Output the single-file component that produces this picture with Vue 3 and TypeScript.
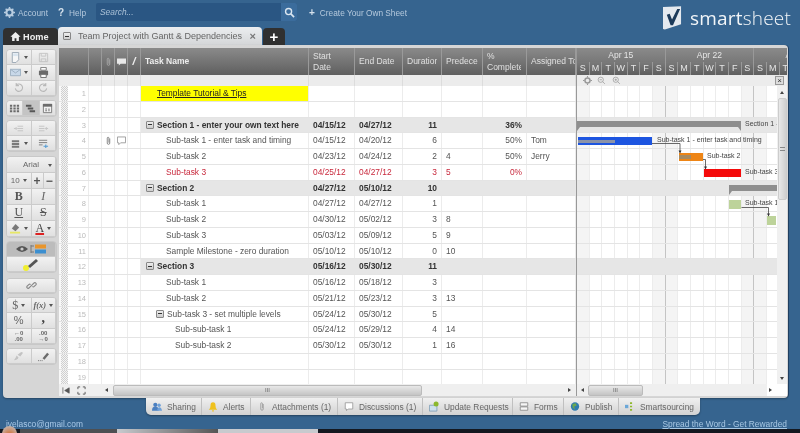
<script setup lang="ts">
interface Row {
  n: number
  name?: string
  start?: string
  end?: string
  dur?: string
  pre?: string
  pct?: string
  who?: string
  kind?: 'section' | 'red' | 'link'
  indent?: number
  toggle?: boolean
  icons?: boolean
}

const rows: Row[] = [
  { n: 1, name: 'Template Tutorial & Tips', kind: 'link', indent: 16 },
  { n: 2 },
  { n: 3, name: 'Section 1 - enter your own text here', start: '04/15/12', end: '04/27/12', dur: '11', pct: '36%', kind: 'section', toggle: true, indent: 5 },
  { n: 4, name: 'Sub-task 1 - enter task and timing', start: '04/15/12', end: '04/20/12', dur: '6', pct: '50%', who: 'Tom', indent: 25, icons: true },
  { n: 5, name: 'Sub-task 2', start: '04/23/12', end: '04/24/12', dur: '2', pre: '4', pct: '50%', who: 'Jerry', indent: 25 },
  { n: 6, name: 'Sub-task 3', start: '04/25/12', end: '04/27/12', dur: '3', pre: '5', pct: '0%', kind: 'red', indent: 25 },
  { n: 7, name: 'Section 2', start: '04/27/12', end: '05/10/12', dur: '10', kind: 'section', toggle: true, indent: 5 },
  { n: 8, name: 'Sub-task 1', start: '04/27/12', end: '04/27/12', dur: '1', indent: 25 },
  { n: 9, name: 'Sub-task 2', start: '04/30/12', end: '05/02/12', dur: '3', pre: '8', indent: 25 },
  { n: 10, name: 'Sub-task 3', start: '05/03/12', end: '05/09/12', dur: '5', pre: '9', indent: 25 },
  { n: 11, name: 'Sample Milestone - zero duration', start: '05/10/12', end: '05/10/12', dur: '0', pre: '10', indent: 25 },
  { n: 12, name: 'Section 3', start: '05/16/12', end: '05/30/12', dur: '11', kind: 'section', toggle: true, indent: 5 },
  { n: 13, name: 'Sub-task 1', start: '05/16/12', end: '05/18/12', dur: '3', indent: 25 },
  { n: 14, name: 'Sub-task 2', start: '05/21/12', end: '05/23/12', dur: '3', pre: '13', indent: 25 },
  { n: 15, name: 'Sub-task 3 - set multiple levels', start: '05/24/12', end: '05/30/12', dur: '5', toggle: true, indent: 15 },
  { n: 16, name: 'Sub-sub-task 1', start: '05/24/12', end: '05/29/12', dur: '4', pre: '14', indent: 34 },
  { n: 17, name: 'Sub-sub-task 2', start: '05/30/12', end: '05/30/12', dur: '1', pre: '16', indent: 34 },
  { n: 18 },
  { n: 19 },
]

const dayLetters = ['S', 'M', 'T', 'W', 'T', 'F', 'S']
const ganttDays = Array.from({ length: 17 }, (_, i) => dayLetters[i % 7])
const months = ['Apr 15', 'Apr 22', 'Apr 29']

const tabs = [
  { label: 'Sharing', w: 56, ic: 'sharing' },
  { label: 'Alerts', w: 49, ic: 'alerts' },
  { label: 'Attachments (1)', w: 87, ic: 'attach' },
  { label: 'Discussions (1)', w: 85, ic: 'disc' },
  { label: 'Update Requests', w: 90, ic: 'update' },
  { label: 'Forms', w: 51, ic: 'forms' },
  { label: 'Publish', w: 55, ic: 'publish' },
  { label: 'Smartsourcing', w: 81, ic: 'smart' },
]

const bars = [
  { cls: 'blue', left: 1, top: 137, w: 74 },
  { cls: 'orange', left: 101.7, top: 153, w: 24.3 },
  { cls: 'red', left: 127, top: 169, w: 37 },
  { cls: 'green', left: 152, top: 200, w: 12.3 },
  { cls: 'green', left: 189.7, top: 216, w: 9.3 },
]
const labels = [
  { text: 'Section 1 -', left: 168, top: 119 },
  { text: 'Sub-task 1 - enter task and timing', left: 80, top: 135 },
  { text: 'Sub-task 2', left: 130, top: 151 },
  { text: 'Sub-task 3', left: 168, top: 167 },
  { text: 'Sub-task 1', left: 168, top: 198 },
]
function pos(left: number, top: number, w?: number) {
  return { left: left + 'px', top: top - 86 + 'px', width: w === undefined ? undefined : w + 'px' }
}
</script>

<template>
  <div class="page">
    <header class="topbar">
      <span class="toplink first"><svg class="ic" viewBox="0 0 12 12"><circle cx="6" cy="6" r="3.400" fill="none" stroke="#b9cde0" stroke-width="2.400"/><path d="M6 0v2M6 10v2M0 6h2M10 6h2M1.800 1.800l1.400 1.400M8.800 8.800l1.400 1.400M1.800 10.200l1.400-1.400M8.800 3.200l1.400-1.400" stroke="#b9cde0" stroke-width="1.600"/></svg>Account</span>
      <span class="toplink help"><b>?</b>Help</span>
      <div class="search">
        <span class="search-text">Search...</span>
        <span class="search-btn"><svg class="ic" viewBox="0 0 12 12"><circle cx="5" cy="5" r="3.300" fill="none" stroke="#dbe6f0" stroke-width="1.500"/><path d="M7.500 7.500l3.500 3.500" stroke="#dbe6f0" stroke-width="1.800"/></svg></span>
      </div>
      <span class="toplink create"><b>+</b>Create Your Own Sheet</span>
      <div class="logo">
        <svg class="logo-mark" viewBox="0 0 20 25"><path d="M0 1l19-1v19l-17 5.500L0 24z" fill="#e4e9ef"/><path d="M4 9l3-1 2.500 6L15 3h3l-7.500 17H8z" fill="#1c3a5a"/></svg>
        <span class="logo-text"><b>smart</b>sheet</span>
      </div>
    </header>

    <nav class="tabbar">
      <div class="tab home"><svg class="ic" viewBox="0 0 12 12"><path d="M6 1L.5 6.200h1.800V11h2.700V7.800h2V11h2.700V6.200h1.800z" fill="#eee"/></svg>Home</div>
      <div class="tab sheet"><span class="minus-box"></span><span class="sheet-name">Team Project with Gantt &amp; Dependencies</span><span class="close">×</span></div>
      <div class="tab plus">+</div>
    </nav>

    <main class="panel">
      <aside class="tools">
        <div class="group g2 h48">
          <span><svg class="ti" viewBox="0 0 12 12"><path d="M2.500.5h7v8l-3 3h-4z" fill="#fafafa" stroke="#8a9aaa"/><path d="M3.500 1.500h5v3h-5z" fill="#d6e4f0"/></svg><i class="caret"></i></span>
          <span><svg class="ti" viewBox="0 0 12 12"><path d="M1.500 1.500h9v9h-9zM3.500 1.500v3h5v-3M3.500 10.500v-3h5v3" fill="none" stroke="#bcbcbc"/></svg></span>
          <span><svg class="ti" viewBox="0 0 12 12"><path d="M.5 2.500h11v7H.5z" fill="#c3d6ea" stroke="#8fa5ba"/><path d="M.5 2.500l5.500 4 5.500-4" fill="none" stroke="#8fa5ba"/></svg><i class="caret"></i></span>
          <span><svg class="ti" viewBox="0 0 12 12"><path d="M3 .5h6v3H3z" fill="#fff" stroke="#666"/><path d="M1 4h10v5H1z" fill="#555"/><path d="M3 8h6v3.500H3z" fill="#fff" stroke="#555"/></svg></span>
          <span><svg class="ti" viewBox="0 0 12 12"><path d="M3.500 3.500a4 4 0 1 1-1 3.500M3.500 1v3h3" fill="none" stroke="#b0b0b0" stroke-width="1.200"/></svg></span>
          <span><svg class="ti" viewBox="0 0 12 12"><path d="M8.500 3.500a4 4 0 1 0 1 3.500M8.500 1v3h-3" fill="none" stroke="#b0b0b0" stroke-width="1.200"/></svg></span>
        </div>
        <div class="group g3 h17">
          <span><svg class="ti" viewBox="0 0 12 12"><path d="M1 2h2.500v2H1zM4.800 2h2.500v2H4.800zM8.500 2H11v2H8.500zM1 5h2.500v2H1zM4.800 5h2.500v2H4.800zM8.500 5H11v2H8.500zM1 8h2.500v2H1zM4.800 8h2.500v2H4.800zM8.500 8H11v2H8.500z" fill="#555"/></svg></span>
          <span class="on"><svg class="ti" viewBox="0 0 12 12"><path d="M1 2h6v2H1zM3 5h6v2H3zM5 8h6v2H5z" fill="#444"/></svg></span>
          <span><svg class="ti" viewBox="0 0 12 12"><path d="M1.500 1.500h9v9h-9z" fill="#f4f4f4" stroke="#666"/><path d="M1 1h10v3H1z" fill="#555"/><path d="M3.500 6h2v1h-2zM3.500 8h2v1h-2zM7 6h1.200v3H7z" fill="#666"/></svg></span>
        </div>
        <div class="group g2 h32">
          <span><svg class="ti" viewBox="0 0 12 12"><path d="M5 3.500h6M5 6h6M5 8.500h6M1 6h3M3 4.500L4.500 6 3 7.500" fill="none" stroke="#bcbcbc"/></svg></span>
          <span><svg class="ti" viewBox="0 0 12 12"><path d="M1 3.500h6M1 6h6M1 8.500h6M8 6h3M9.500 4.500L8 6l1.500 1.500" fill="none" stroke="#bcbcbc"/></svg></span>
          <span><svg class="ti" viewBox="0 0 12 12"><path d="M2 2.500h8V4.500H2zM2 5.500h8V7.500H2zM2 8.500h8V10.500H2z" fill="#666"/></svg><i class="caret"></i></span>
          <span><svg class="ti" viewBox="0 0 12 12"><path d="M1 2.500h9M1 5h9M1 7.500h4" stroke="#666" fill="none"/><path d="M6 9h5M8.500 7v4" stroke="#3c8fd0" stroke-width="1.200" fill="none"/></svg></span>
        </div>
        <div class="group g4 h82">
          <span class="s4 fontname">Arial<i class="caret far"></i></span>
          <span class="s2 size">10<i class="caret"></i></span><span class="pm">+</span><span class="pm">−</span>
          <span class="s2 face"><b>B</b></span><span class="s2 face"><i>I</i></span>
          <span class="s2 face"><u>U</u></span><span class="s2 face"><s>S</s></span>
          <span class="s2"><svg class="ti" viewBox="0 0 12 12"><path d="M2 6l4-5 4 4-4 4z" fill="#666"/><path d="M0 10.500h11" stroke="#e8e850" stroke-width="2"/></svg><i class="caret"></i></span>
          <span class="s2 face acolor"><u>A</u><i class="caret"></i></span>
        </div>
        <div class="group g1 h32 m2">
          <span class="gray"><svg viewBox="0 0 32 12" class="wide"><path d="M1 6q6-6 12 0-6 6-12 0z" fill="#555"/><circle cx="7" cy="6" r="1.600" fill="#ccc"/><path d="M16 2v8M16 3h3M16 9h3" stroke="#777" fill="none"/><rect x="20" y="1.500" width="11" height="4" fill="#e8952c"/><rect x="20" y="6.500" width="11" height="4" fill="#3c8fd0"/></svg></span>
          <span><svg viewBox="0 0 20 14" class="wide2"><circle cx="5" cy="11" r="3" fill="#f0ee30"/><path d="M7 9l8-7 2 2-8 7z" fill="#555"/></svg></span>
        </div>
        <div class="group g1 h16 m5">
          <span><svg class="ti" viewBox="0 0 12 12"><path d="M5 7L3 9a1.500 1.500 0 0 1-2-2l2-2a1.500 1.500 0 0 1 2 0M7 5l2-2a1.500 1.500 0 0 1 2 2L9 7a1.500 1.500 0 0 1-2 0M4.500 7.500l3-3" fill="none" stroke="#777" stroke-width="1.200"/></svg></span>
        </div>
        <div class="group g2 h48">
          <span class="money">$<i class="caret"></i></span><span class="fx"><i>f(x)</i><i class="caret"></i></span>
          <span class="pct">%</span><span class="comma">,</span>
          <span class="mini">←0<br/>.00</span><span class="mini">.00<br/>→0</span>
        </div>
        <div class="group g2 h17">
          <span><svg class="ti" viewBox="0 0 12 12"><path d="M1 10q4 0 5-3l-2-2q-1 3-3 5zM5 4l4-3 2 1-3 4z" fill="#bcbcbc"/></svg></span>
          <span><svg class="ti" viewBox="0 0 12 12"><path d="M5 8l5-6 2 1.500-5 6z" fill="#555"/><path d="M0 10.500h1M2 10.500h1M4 10.500h1" stroke="#555"/></svg></span>
        </div>
      </aside>

      <section class="grid">
        <div class="ghead">
          <div class="c first-h"></div>
          <div class="c ico"></div>
          <div class="c ico"><svg viewBox="0 0 8 12" class="mini-ic"><path d="M5.500 3v5.500a1.500 1.500 0 0 1-3 0V2.500a1 1 0 0 1 2 0V8" fill="none" stroke="#aaa"/></svg></div>
          <div class="c ico"><svg viewBox="0 0 10 10" class="mini-ic"><path d="M0 1h10v6H4L2 9V7H0z" fill="#e8e8e8"/></svg></div>
          <div class="c ico slash">/</div>
          <div class="c name hname">Task Name</div>
          <div class="c d1">Start<br/>Date</div><div class="c d2">End Date</div><div class="c d3"><span class="cl w30">Duration</span></div><div class="c d4">Predece</div><div class="c d5">%<span class="cl w34">Complete</span></div><div class="c d6">Assigned To</div>
        </div>
        <div class="gsub">
          <div class="c first-h"></div><div class="c ico"></div><div class="c ico"></div><div class="c ico"></div><div class="c ico"></div>
          <div class="c name"></div><div class="c d1"></div><div class="c d2"></div><div class="c d3"></div><div class="c d4"></div><div class="c d5"></div><div class="c d6"></div>
        </div>
        <div class="gbody">
          <div v-for="r in rows" :key="r.n" class="row" :class="r.kind">
            <div class="c gut"></div>
            <div class="c num">{{ r.n }}</div>
            <div class="c ico"></div>
            <div class="c ico"><svg v-if="r.icons" viewBox="0 0 8 12" class="mini-ic"><path d="M5.500 3v5.500a1.500 1.500 0 0 1-3 0V2.500a1 1 0 0 1 2 0V8" fill="none" stroke="#777"/></svg></div>
            <div class="c ico"><svg v-if="r.icons" viewBox="0 0 10 10" class="mini-ic"><path d="M.5.5h9V7H4L2 9V7H.5z" fill="#fff" stroke="#999"/></svg></div>
            <div class="c ico"></div>
            <div class="c name" :style="{ paddingLeft: (r.indent ?? 0) + 'px' }">
              <span v-if="r.toggle" class="minus-box small"></span>
              <span class="nm">{{ r.name }}</span>
            </div>
            <div class="c d1">{{ r.start }}</div><div class="c d2">{{ r.end }}</div>
            <div class="c d3 right">{{ r.dur }}</div><div class="c d4">{{ r.pre }}</div>
            <div class="c d5 right">{{ r.pct }}</div><div class="c d6">{{ r.who }}</div>
          </div>
        </div>
        <div class="hscroll">
          <svg class="hs-ic" viewBox="0 0 10 10"><path d="M1 1.500v7M8 2L3 5l5 3z" fill="#555" stroke="#555" stroke-width=".8"/></svg>
          <svg class="hs-ic second" viewBox="0 0 10 10"><path d="M1 3.500V1h2.500M6.500 1H9v2.500M9 6.500V9H6.500M3.500 9H1V6.500" fill="none" stroke="#555"/></svg>
          <i class="tri-l first-arrow"></i>
          <div class="thumb wide-thumb">III</div>
          <i class="tri-r"></i>
        </div>
      </section>

      <section class="gantt">
        <div class="months"><span v-for="m in months" :key="m" class="month">{{ m }}</span></div>
        <div class="days"><span v-for="(d, i) in ganttDays" :key="i" class="day">{{ d }}</span></div>
        <div class="gtools">
          <svg class="ic" viewBox="0 0 12 12"><circle cx="6" cy="6" r="3.400" fill="none" stroke="#999" stroke-width="2"/><path d="M6 0v2M6 10v2M0 6h2M10 6h2" stroke="#999" stroke-width="1.500"/></svg>
          <svg class="ic" viewBox="0 0 12 12"><circle cx="5" cy="5" r="3.500" fill="none" stroke="#999"/><path d="M3.500 5h3M7.500 7.500l3 3" stroke="#999"/></svg>
          <svg class="ic" viewBox="0 0 12 12"><circle cx="5" cy="5" r="3.500" fill="none" stroke="#999"/><path d="M3.500 5h3M5 3.500v3M7.500 7.500l3 3" stroke="#999"/></svg>
          <span class="gx">×</span>
        </div>
        <div class="gbody2">
          <div class="chart">
            <div class="columns"><span v-for="(d, i) in ganttDays" :key="i" class="gcol" :class="{ wk: d === 'S', wkend: i % 7 === 6 }"></span></div>
            <div class="gridrows"><div v-for="r in rows" :key="r.n" class="grow" :class="{ sect: r.kind === 'section' }"></div></div>
            <div class="sectionbar" :style="pos(0, 121, 164)"></div>
            <div class="sectionbar" :style="pos(152, 185, 60)"></div>
            <div v-for="(b, i) in bars" :key="i" class="bar" :class="b.cls" :style="pos(b.left, b.top, b.w)"></div>
            <div class="progress" :style="pos(1, 139.500, 37)"></div>
            <div class="progress or" :style="pos(102, 155, 12)"></div>
            <svg class="links" viewBox="0 0 200 300">
              <path d="M75 57.500h28v9M126 73.500h2.500v9M164.500 121.500h27v8" fill="none" stroke="#444" stroke-width="0.800"/>
              <path d="M101.500 64.500h3l-1.500 3zM127 80.500h3l-1.500 3zM190 127.500h3l-1.500 3z" fill="#333"/>
            </svg>
            <span v-for="l in labels" :key="l.text + l.top" class="blabel" :style="pos(l.left, l.top)">{{ l.text }}</span>
          </div>
          <div class="vscroll"><i class="tri-u"></i><div class="vthumb"><i></i></div><i class="tri-d"></i></div>
        </div>
        <div class="hscroll g">
          <i class="tri-l"></i><div class="thumb g-thumb">III</div><i class="tri-r"></i>
        </div>
      </section>
    </main>

    <div class="bottomtabs">
      <span v-for="t in tabs" :key="t.label" class="btab" :style="{ width: t.w + 'px' }">
        <svg class="bi" viewBox="0 0 12 12">
          <g v-if="t.ic === 'sharing'"><circle cx="4" cy="4" r="2.500" fill="#4a7fc0"/><path d="M0 11q0-5 4-5t4 5z" fill="#4a7fc0"/><circle cx="8.500" cy="4.500" r="2" fill="#6ea0d8"/><path d="M6 11q1-4 3-4t3 4z" fill="#6ea0d8"/></g>
          <path v-else-if="t.ic === 'alerts'" d="M6 1q3 0 3 4t2 5H1q2-1 2-5t3-4zM5 10.500h2V12H5z" fill="#efc11d"/>
          <path v-else-if="t.ic === 'attach'" d="M7.500 3v6a1.500 1.500 0 0 1-3 0V2.500a1 1 0 0 1 2 0V8" fill="none" stroke="#999"/>
          <path v-else-if="t.ic === 'disc'" d="M1.500 1.500h9V9H5L3 11V9H1.500z" fill="#fff" stroke="#999"/>
          <g v-else-if="t.ic === 'update'"><path d="M.5 4.500h9v7h-9z" fill="#cfe0ee" stroke="#7d9cb5"/><circle cx="8.500" cy="3" r="3" fill="#8cb82d"/></g>
          <path v-else-if="t.ic === 'forms'" d="M1.500 1.500h9v4h-9zM1.500 6.500h9v4h-9z" fill="#f6f6f6" stroke="#888" stroke-linejoin="round"/>
          <g v-else-if="t.ic === 'publish'"><circle cx="6" cy="6" r="5" fill="#2f7bb0"/><path d="M3 3l4-1 1 3-3 1 1 4-3-3z" fill="#6aa84f"/></g>
          <g v-else><rect x="0" y="4" width="4" height="4" fill="#6ba7d8"/><path d="M6 1h2.500v2H6zM6 5h2.500v2H6zM6 9h2.500v2H6z" fill="#8fb82d"/></g>
        </svg>{{ t.label }}
      </span>
    </div>
    <footer class="foot"><span class="email">ivelasco@gmail.com</span><span class="spread">Spread the Word - Get Rewarded</span></footer>
    <div class="taskbar"><span class="start"></span><span class="tb1"></span><span class="tb2"></span><span class="tb3"></span></div>
  </div>
</template>

<style>
html, body { margin: 0; padding: 0; background: #36648f; }
</style>

<style scoped>
.page { width: 800px; height: 433px; overflow: hidden; background: #36648f; font-family: "Liberation Sans", Arial, sans-serif; font-size: 8.400px; color: #333; display: flex; flex-direction: column; filter: blur(0.300px); position: relative; }
.ic { width: 11px; height: 11px; flex: none; }
.topbar { height: 27px; display: flex; align-items: flex-start; padding: 3px 0 0 4px; box-sizing: border-box; color: #b5c9dd; flex: none; }
.toplink { display: flex; align-items: center; gap: 3px; height: 19px; font-size: 8.300px; flex: none; }
.toplink b { font-size: 10px; color: #d5e1ec; font-weight: bold; }
.first { width: 45px; }
.help { margin-left: 9px; width: 29px; gap: 5px; }
.search { width: 201px; height: 18px; margin-left: 9px; background: #2a5683; border-radius: 2px; display: flex; justify-content: space-between; align-items: center; flex: none; }
.search-text { font-style: italic; padding-left: 4px; color: #a9c0d6; font-size: 8.400px; }
.search-btn { width: 16px; height: 18px; background: #3b6c9c; display: flex; align-items: center; justify-content: center; border-radius: 0 2px 2px 0; }
.create { margin-left: 12px; gap: 5px; }
.logo { margin-left: auto; margin-right: 9px; margin-top: 2px; display: flex; gap: 8px; align-items: center; color: #f2f5f8; }
.logo-mark { width: 19px; height: 24px; }
.logo-text { font-size: 19px; font-family: "Open Sans", sans-serif; letter-spacing: 0.200px; font-weight: 300; }
.logo-text b { font-weight: 400; }
.tabbar { height: 18px; display: flex; padding-left: 3px; flex: none; }
.tab { display: flex; align-items: center; border-radius: 4px 4px 0 0; box-sizing: border-box; }
.home { width: 55px; background: #303030; color: #eee; font-weight: bold; font-size: 9.200px; gap: 2px; padding-left: 7px; margin-top: 1px; }
.sheet { width: 204px; background: linear-gradient(#eceef0, #d4d6d8); padding-left: 5px; font-size: 9px; color: #666; white-space: nowrap; }
.sheet-name { margin-left: 7px; flex: 1; }
.close { margin-right: 6px; font-size: 11px; font-weight: bold; color: #777; }
.plus { width: 22px; margin-left: 1px; background: #303030; color: #fff; font-size: 15px; font-weight: bold; justify-content: center; margin-top: 1px; }
.minus-box { display: inline-block; width: 6px; height: 6px; border: 1px solid #888; border-radius: 1px; background: linear-gradient(#eee, #ccc); position: relative; vertical-align: -1px; flex: none; }
.minus-box::after { content: ""; position: absolute; left: 1px; right: 1px; top: 2.500px; height: 1px; background: #333; }
.minus-box.small { margin-right: 3px; }
.panel { height: 353px; width: 785px; margin-left: 3px; background: #d6d6d6; border-radius: 0 4px 4px 4px; display: flex; padding: 3px 0 2px; box-sizing: border-box; flex: none; box-shadow: 0 1px 2px rgba(0,0,0,.3), 1px 0 0 rgba(30,60,95,.8); }
.tools { width: 56px; flex: none; padding: 1px 0 0 3px; box-sizing: border-box; display: flex; flex-direction: column; gap: 3px; }
.group { display: grid; grid-auto-rows: 1fr; border: 1px solid #c8c8c8; border-radius: 4px; overflow: hidden; flex: none; color: #666; width: 51px; box-sizing: border-box; }
.group > span { display: flex; align-items: center; justify-content: center; min-height: 0; border-right: 1px solid #cbcbcb; border-bottom: 1px solid #cbcbcb; font-size: 8px; box-sizing: border-box; background: linear-gradient(#f2f2f2, #e0e0e0); gap: 2px; overflow: hidden; white-space: nowrap; }
.h48 { height: 48px; }
.h17 { height: 17px; }
.h32 { height: 32px; }
.h82 { height: 82px; }
.h16 { height: 16px; }
.m2 { margin-top: 0; }
.m5 { margin-top: 2px; }
.h82 { margin-top: 1px; }
.g1 { grid-template-columns: 1fr; }
.g2 { grid-template-columns: 1fr 1fr; }
.g3 { grid-template-columns: 1fr 1.100fr 1fr; }
.g4 { grid-template-columns: repeat(4, 1fr); }
.group .s4 { grid-column: span 4; }
.group .s2 { grid-column: span 2; }
.group .gray { background: #bcbcbc; }
.group .on { background: #c4c4c4; }
.ti { width: 11px; height: 11px; flex: none; opacity: .85; }
.caret { display: inline-block; width: 0; height: 0; border-top: 3px solid #555; border-left: 2px solid transparent; border-right: 2px solid transparent; flex: none; margin-left: 1px; }
.caret.far { position: absolute; right: 3px; top: 7px; }
.fontname { position: relative; font-size: 8px; }
.group .pm { font-weight: bold; font-size: 12px; color: #555; }
.group .face { font-family: "Liberation Serif", serif; font-size: 12px; color: #555; position: relative; }
.face i { font-weight: normal; color: #666; }
.acolor u { color: #444; text-decoration-color: #d22; text-decoration-thickness: 1.500px; }
.group .money { font-size: 12px; font-family: "Liberation Serif", serif; }
.group .fx { font-family: "Liberation Serif", serif; font-size: 8.500px; font-weight: bold; }
.group .pct { font-size: 11px; color: #666; }
.group .comma { font-size: 14px; line-height: 9px; padding-bottom: 5px; font-weight: bold; color: #444; font-family: "Liberation Serif", serif; }
.group .mini { font-size: 6px; line-height: 6px; text-align: center; font-weight: bold; white-space: normal; display: block; padding-top: 1px; }
.wide { width: 32px; height: 12px; }
.wide2 { width: 20px; height: 14px; }

.grid { width: 517px; flex: none; display: flex; flex-direction: column; background: #fff; }
.ghead, .gsub, .row { display: flex; }
.ghead { height: 27px; background: linear-gradient(#8a8a8a, #5f5f5f); color: #e0e0e0; font-size: 8.500px; line-height: 11px; flex: none; }
.ghead .c { display: flex; align-items: center; border-right: 1px solid #9a9a9a; padding-left: 4px; overflow: hidden; white-space: nowrap; }
.c { box-sizing: border-box; flex: none; overflow: hidden; white-space: nowrap; }
.first-h { width: 30px; }
.gut { width: 9px; }
.num { width: 21px; }
.ico { width: 13px; }
.ghead .ico { padding: 0; justify-content: center; }
.slash { font-style: italic; font-weight: bold; font-size: 11px; color: #eee; }
.name { width: 168px; }
.d1 { width: 46px; }
.d2 { width: 48px; }
.d3 { width: 39px; }
.d4 { width: 41px; }
.d5 { width: 44px; }
.d6 { width: 49px; }
.ghead .d1, .ghead .d5 { white-space: normal; display: block; padding-top: 3px; }
.ghead .hname { font-weight: bold; color: #eee; }
.cl { display: block; overflow: hidden; white-space: nowrap; }
.w30 { width: 30px; }
.w34 { width: 34px; }
.gsub { height: 11px; background: #ececec; flex: none; }
.gsub .c { border-right: 1px solid #dcdcdc; }
.gsub .first-h { border-right-color: #dcdcdc; }
.gbody { flex: 1; min-height: 0; overflow: hidden; }
.row { height: 15.750px; line-height: 15px; border-bottom: 1px solid #e4e4e4; box-sizing: border-box; color: #555; font-size: 8.400px; }
.row .c { border-right: 1px solid #ececec; padding: 0 4px; }
.row .gut { padding: 0; border-right: 0; border-left: 2px solid #f8f8f8; background: repeating-conic-gradient(#cfcfcf 0 25%, #f4f4f4 0 50%) 0 0 / 2px 2px; }
.row .num { color: #bbb; text-align: right; padding-right: 2px; font-size: 7.500px; }
.row .ico { padding: 0; display: flex; align-items: center; justify-content: center; }
.mini-ic { width: 9px; height: 10px; }
.row .name { padding-right: 0; }
.right { text-align: right; }
.row .d3.right, .row .d5.right { padding-right: 4px; }
.row.section .name, .row.section .d1, .row.section .d2, .row.section .d3, .row.section .d4, .row.section .d5, .row.section .d6 { background: #e6e6e6; font-weight: bold; color: #333; border-right-color: #e6e6e6; }
.row.red .name, .row.red .d1, .row.red .d2, .row.red .d3, .row.red .d4, .row.red .d5 { color: #c8283c; }
.row.link .name { background: #ffff00; }
.row.link .nm { text-decoration: underline; color: #222; }
.hscroll { height: 12px; flex: none; display: flex; align-items: center; background: #efefef; color: #444; font-size: 7px; }
.hs-ic { width: 9px; height: 9px; margin-left: 3px; flex: none; }
.hs-ic.second { margin-left: 6px; }
.tri-l, .tri-r, .tri-u, .tri-d { display: block; width: 0; height: 0; flex: none; }
.tri-l { border-right: 3px solid #444; border-top: 2.500px solid transparent; border-bottom: 2.500px solid transparent; margin: 0 4px; }
.tri-r { border-left: 3px solid #444; border-top: 2.500px solid transparent; border-bottom: 2.500px solid transparent; margin-left: auto; margin-right: 5px; }
.first-arrow { margin-left: 19px; margin-right: 5px; }
.tri-u { border-bottom: 3px solid #444; border-left: 2.500px solid transparent; border-right: 2.500px solid transparent; margin: 5px 0 4px; }
.tri-d { border-top: 3px solid #444; border-left: 2.500px solid transparent; border-right: 2.500px solid transparent; margin: auto 0 4px; }
.thumb { height: 11px; border: 1px solid #bbb; border-radius: 2px; background: linear-gradient(#e8e8e8, #c4c4c4); box-sizing: border-box; text-align: center; line-height: 9px; font-size: 6px; color: #666; flex: none; }
.wide-thumb { width: 309px; }
.gantt { width: 211px; flex: none; display: flex; flex-direction: column; background: #fff; border-left: 1px solid #999; box-sizing: border-box; overflow: hidden; }
.months { height: 14px; background: linear-gradient(#8a8a8a, #787878); display: flex; color: #e6e6e6; flex: none; font-size: 8.500px; line-height: 14px; }
.month { width: 88.600px; text-align: center; flex: none; border-right: 1px solid #999; box-sizing: border-box; }
.days { height: 13px; background: linear-gradient(#7a7a7a, #5f5f5f); display: flex; color: #e6e6e6; flex: none; font-size: 9px; line-height: 13px; }
.day { width: 12.660px; text-align: center; flex: none; border-right: 1px solid #999; box-sizing: border-box; }
.gtools { height: 11px; background: #ececec; display: flex; align-items: center; gap: 5.500px; padding-left: 5.500px; flex: none; }
.gtools .ic { width: 9px; height: 9px; }
.gx { margin-left: auto; margin-right: 3px; width: 9px; height: 9px; line-height: 8px; text-align: center; border: 1px solid #999; box-sizing: border-box; background: #ddd; font-size: 8px; }
.gbody2 { flex: 1; display: flex; min-height: 0; }
.chart { position: relative; flex: 1; overflow: hidden; min-width: 0; }
.columns { position: absolute; inset: 0; display: flex; }
.gcol { width: 12.660px; flex: none; border-right: 1px solid #ececec; box-sizing: border-box; }
.gcol.wk { background: #f4f4f4; }
.gcol.wkend { border-right-color: #c4c4c4; }
.gridrows { position: absolute; inset: 0; }
.grow { height: 15.750px; border-bottom: 1px solid #e4e4e4; box-sizing: border-box; }
.grow.sect { background: #e6e6e6; }
.sectionbar { position: absolute; height: 6px; background: #8e8e8e; }
.sectionbar::before, .sectionbar::after { content: ""; position: absolute; top: 6px; border-top: 4px solid #8e8e8e; }
.sectionbar::before { left: 0; border-right: 3px solid transparent; }
.sectionbar::after { right: 0; border-left: 3px solid transparent; }
.bar { position: absolute; height: 8px; }
.bar.blue { background: #1d55e0; }
.bar.orange { background: #ee8516; }
.bar.red { background: #f40a0a; }
.bar.green { background: #bdd39a; height: 8.500px; }
.progress { position: absolute; height: 3px; background: #8b93a8; }
.progress.or { background: #a78a60; height: 4px; }
.links { position: absolute; left: 0; top: 0; width: 200px; height: 300px; }
.blabel { position: absolute; font-size: 7px; line-height: 10px; color: #444; white-space: nowrap; }
.vscroll { width: 10px; flex: none; background: #f0f0f0; display: flex; flex-direction: column; align-items: center; }
.vthumb { height: 102px; width: 9px; border: 1px solid #ccc; border-radius: 2px; background: linear-gradient(90deg, #e8e8e8, #cfcfcf); box-sizing: border-box; display: flex; align-items: center; justify-content: center; flex: none; }
.vthumb i { display: block; width: 5px; height: 4px; border-top: 1px solid #888; border-bottom: 1px solid #888; box-sizing: border-box; }
.hscroll.g { padding-right: 10px; background: linear-gradient(90deg, #efefef 190px, #fff 190px); }
.g-thumb { width: 55px; }
.bottomtabs { display: flex; margin-left: 146px; height: 17px; flex: none; background: linear-gradient(#f0f0f0, #d2d2d2); border-radius: 0 0 5px 5px; width: 554px; box-shadow: 0 1px 2px rgba(0,0,0,.35); }
.btab { display: flex; align-items: center; gap: 5px; box-sizing: border-box; padding-left: 6px; font-size: 8.400px; color: #666; border-right: 1px solid #c0c0c0; white-space: nowrap; flex: none; }
.btab:last-child { border-right: 0; }
.bi { width: 10px; height: 11px; flex: none; }
.foot { display: flex; justify-content: space-between; align-items: center; padding: 3px 13px 0 6px; height: 14px; box-sizing: border-box; font-size: 8.400px; flex: none; color: #a9c9e8; }
.spread { text-decoration: underline; color: #a8c8e4; }
.taskbar { flex: 1; display: flex; background: #141820; }
.start { width: 20px; flex: none; position: relative; }
.start::after { content: ""; position: absolute; left: 2px; top: -3px; width: 15px; height: 15px; border-radius: 50%; background: radial-gradient(circle at 50% 60%, #d26b2c, #c0c8d0); }
.tb1 { width: 97px; flex: none; background: #4d4f52; }
.tb2 { width: 101px; flex: none; background: linear-gradient(90deg, #c8cace, #555); }
.tb3 { width: 100px; flex: none; background: #c8cace; }
</style>
